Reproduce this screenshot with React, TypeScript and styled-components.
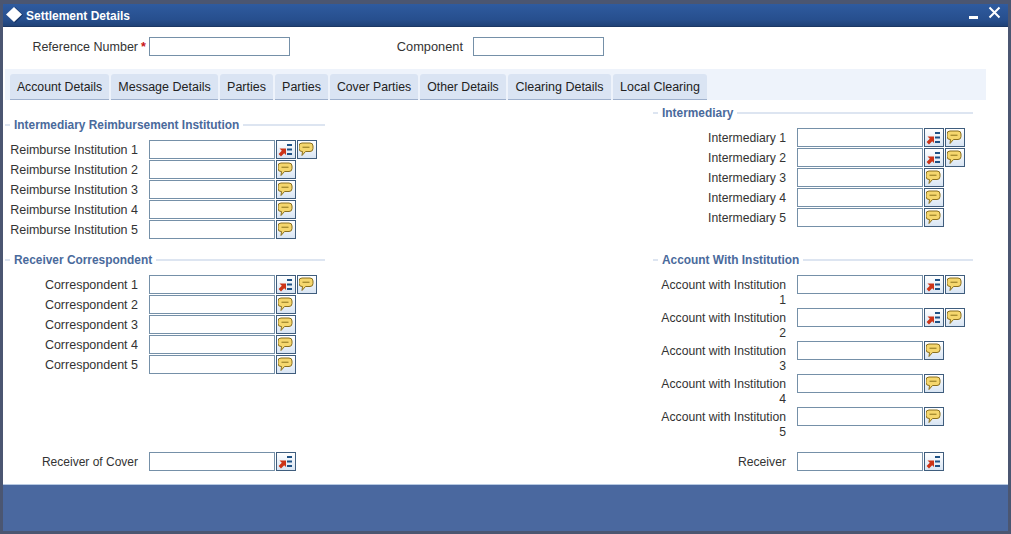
import React from "react";
import styled, { createGlobalStyle } from "styled-components";

const Global = createGlobalStyle`
  html, body { margin: 0; padding: 0; background: #4b5671; }
  body { font-family: "Liberation Sans", Arial, sans-serif; font-size: 12.5px; color: #333; }
`;

const Window = styled.div`
  width: 1011px; height: 534px; box-sizing: border-box;
  padding: 4px 3px 3px 3px; display: flex; flex-direction: column; overflow: hidden;
  background: #4b5671;
`;
const TitleBar = styled.div`
  height: 23px; flex: none; display: flex; align-items: center; padding: 0 7px 0 3px; gap: 3px;
  background: linear-gradient(#2f5b9f, #274f8e 70%, #1f4277);
  border-bottom: 1px solid #1b3764; box-sizing: border-box;
`;
const TitleText = styled.span`
  color: #fff; font-weight: bold; font-size: 12px; flex: 1; padding-top: 1px;
`;
const Content = styled.div`
  flex: 1; background: #fff; display: flex; flex-direction: column; min-height: 0;
`;
const HeaderRow = styled.div`
  height: 42px; flex: none; display: flex; align-items: flex-start; padding-top: 10px; box-sizing: border-box;
`;
const HeaderLabel = styled.label<{ $w: number; $fs?: number; $lh?: number }>`
  width: ${p => p.$w}px; text-align: right; line-height: ${p => p.$lh ?? 21}px; flex: none; white-space: nowrap;
  font-size: ${p => p.$fs ?? 12.5}px;
`;
const Star = styled.span`
  color: #c8141a; font-weight: bold; width: 11px; flex: none; text-align: center; line-height: 21px;
`;
const Input = styled.div<{ $w?: number }>`
  width: ${p => p.$w ?? 126}px; height: 19px; box-sizing: border-box; flex: none;
  border: 1px solid #7590a8; background: #fff;
`;
const TabStrip = styled.div`
  width: 981px; height: 31px; margin-left: 2px; flex: none; box-sizing: border-box;
  padding: 5px 0 0 5px; display: flex; gap: 2px; background: #eef3fb;
`;
const Tab = styled.div<{ $w: number; $fs: number }>`
  width: ${p => p.$w}px; height: 26px; box-sizing: border-box; text-align: center;
  font-size: ${p => p.$fs}px;
  line-height: 27px; background: #dae4f3; border-bottom: 1px solid #9fb1cd;
  border-radius: 3px 3px 0 0; color: #222; white-space: nowrap;
`;
const Columns = styled.div`
  flex: 1; display: flex; justify-content: space-between; padding: 0 35px 0 2px; min-height: 0;
`;
const Column = styled.div`
  width: 320px; display: flex; flex-direction: column;
`;
const Legend = styled.div<{ $top: number; $bottom: number }>`
  margin-top: ${p => p.$top}px; margin-bottom: ${p => p.$bottom}px; height: 16px;
  display: flex; align-items: center; gap: 4px; color: #4a6a9c; font-weight: bold; font-size: 11.9px;
  white-space: nowrap;
  &::before { content: ""; width: 5px; height: 2px; background: #dde5f1; flex: none; }
  &::after { content: ""; flex: 1; height: 2px; background: #dde5f1; }
`;
const Row = styled.div<{ $h?: number }>`
  height: ${p => p.$h ?? 20}px; display: flex; align-items: flex-start; flex: none;
`;
const Label = styled.div<{ $left?: number; $fs?: number }>`
  width: 133px; margin-right: 11px; padding-left: ${p => p.$left ?? 0}px; box-sizing: border-box;
  font-size: ${p => p.$fs ?? 12.5}px;
  text-align: right; line-height: 15px; padding-top: 3px; flex: none; color: #333;
`;
const Btn = styled.div`
  width: 20px; height: 19px; box-sizing: border-box; margin-left: 1px; flex: none;
  border: 1px solid #3f5d7d; background: linear-gradient(#ffffff, #d9e5f3);
  display: flex; align-items: center; justify-content: center;
`;
const Spacer = styled.div`
  flex: 1;
`;
const Bottom = styled.div`
  height: 12px; flex: none; background: #fff;
`;
const Footer = styled.div`
  height: 47px; flex: none; box-sizing: border-box; background: #4a689f; border-top: 1px solid #b7c9e2;
`;

const LookupIcon = () => (
  <svg width="16" height="15" viewBox="0 0 16 15">
    <path d="M1.5 6.5 H8 V13 L6.2 11.2 L3 14.4 L0.6 12 L3.8 8.8 Z" fill="#cc3418" />
    <rect x="9" y="2" width="5" height="2" fill="#1f5286" />
    <rect x="9" y="6.5" width="5" height="2" fill="#1f5286" />
    <rect x="9" y="11" width="5" height="2" fill="#1f5286" />
  </svg>
);
const MessageIcon = () => (
  <svg width="16" height="15" viewBox="1 0 16 15">
    <path d="M4 1 H12 Q15 1 15 4 V6.5 Q15 9.5 12 9.5 H7.5 L4 13.5 L4.5 9.5 H4 Q1 9.5 1 6.5 V4 Q1 1 4 1 Z" fill="#f5d76e" stroke="#8a6f1e" strokeWidth="1" />
    <path d="M4.5 5.3 H11.5" stroke="#a98f33" strokeWidth="1.4" />
  </svg>
);

type F = { label: string; lookup?: boolean; msg?: boolean };

const Field = ({ label, lookup, msg, h, left, fs }: F & { h?: number; left?: number; fs?: number }) => (
  <Row $h={h}>
    <Label $left={left} $fs={fs}>{label}</Label>
    <Input />
    {lookup && <Btn><LookupIcon /></Btn>}
    {msg && <Btn><MessageIcon /></Btn>}
  </Row>
);

const five = (base: string): F[] => [1, 2, 3, 4, 5].map(n => ({ label: `${base} ${n}`, lookup: n === 1, msg: true }));
const fiveTwo = (base: string): F[] => [1, 2, 3, 4, 5].map(n => ({ label: `${base} ${n}`, lookup: n <= 2, msg: true }));

const tabs: [string, number, number][] = [
  ["Account Details", 99, 12.25], ["Message Details", 107, 12.5], ["Parties", 53, 12.5], ["Parties", 53, 12.5],
  ["Cover Parties", 88, 12.25], ["Other Details", 86, 12.25], ["Clearing Details", 103, 12.5], ["Local Clearing", 94, 12.5],
];

export default function App() {
  return (
    <Window>
      <Global />
      <TitleBar>
        <svg width="17" height="18" viewBox="0 0 17 18">
          <path d="M9 1 L17 9 L9 17 L1 9 Z" fill="#143264" />
          <path d="M8 1 L16 8.5 L8 16 L0 8.5 Z" fill="#fff" />
        </svg>
        <TitleText>Settlement Details</TitleText>
        <svg width="10" height="4" viewBox="0 0 10 4" style={{ marginTop: 6, marginRight: 6 }}>
          <rect x="0" y="0" width="9" height="3" fill="#fff" />
        </svg>
        <svg width="13" height="13" viewBox="0 0 13 13" style={{ marginBottom: 6 }}>
          <path d="M1.5 1.5 L11.5 11.5 M11.5 1.5 L1.5 11.5" stroke="#fff" strokeWidth="2" />
        </svg>
      </TitleBar>
      <Content>
        <HeaderRow>
          <HeaderLabel $w={135}>Reference Number</HeaderLabel>
          <Star>*</Star>
          <Input $w={141} />
          <HeaderLabel $w={173} $fs={12.8} $lh={19}>Component</HeaderLabel>
          <span style={{ width: 10 }} />
          <Input $w={131} />
        </HeaderRow>
        <TabStrip>
          {tabs.map(([t, w, fs], i) => <Tab key={i} $w={w} $fs={fs}>{t}</Tab>)}
        </TabStrip>
        <Columns>
          <Column>
            <Legend $top={17} $bottom={7}>Intermediary Reimbursement Institution</Legend>
            {five("Reimburse Institution").map(f => <Field key={f.label} {...f} />)}
            <Legend $top={12} $bottom={7}>Receiver Correspondent</Legend>
            {five("Correspondent").map(f => <Field key={f.label} {...f} />)}
            <Spacer />
            <Field label="Receiver of Cover" lookup fs={12} />
            <Bottom />
          </Column>
          <Column>
            <Legend $top={5} $bottom={7}>Intermediary</Legend>
            {fiveTwo("Intermediary").map(f => <Field key={f.label} {...f} fs={12.2} />)}
            <Legend $top={24} $bottom={7}>Account With Institution</Legend>
            {fiveTwo("Account with Institution").map(f => <Field key={f.label} {...f} h={33} left={7} fs={12.2} />)}
            <Spacer />
            <Field label="Receiver" lookup fs={12.2} />
            <Bottom />
          </Column>
        </Columns>
      </Content>
      <Footer />
    </Window>
  );
}
